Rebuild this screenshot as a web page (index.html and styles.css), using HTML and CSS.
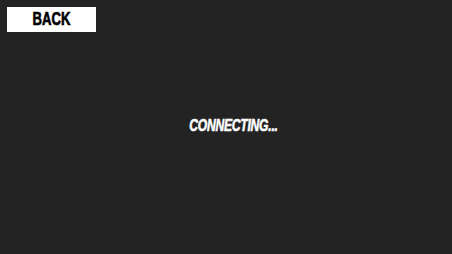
FILE: index.html
```html
<!DOCTYPE html>
<html>
<head>
<meta charset="utf-8">
<link rel="stylesheet" href="styles.css">
</head>
<body>
<div class="screen">
  <div class="top">
    <button class="back"><span class="back-label">BACK</span></button>
  </div>
  <div class="center">
    <span class="status">CONNECTING...</span>
  </div>
</div>
</body>
</html>
```
FILE: styles.css
```css
html, body {
  margin: 0;
  padding: 0;
  background: #232323;
}
.screen {
  width: 452px;
  height: 254px;
  display: flex;
  flex-direction: column;
  box-sizing: border-box;
  padding: 7px;
}
.top {
  display: flex;
}
.back {
  width: 89px;
  height: 25px;
  background: #ffffff;
  border: none;
  padding: 0 0 2px 0;
  margin: 0;
  display: flex;
  align-items: center;
  justify-content: center;
}
.back-label {
  display: inline-block;
  font-family: "Liberation Sans", Arial, sans-serif;
  font-weight: bold;
  font-size: 19px;
  line-height: 1;
  color: #000;
  -webkit-text-stroke: 0.7px #000;
  transform: scaleX(0.69);
}
.center {
  flex: 1;
  display: flex;
  align-items: center;
  justify-content: center;
  padding: 0 0 26px 15px;
}
.status {
  display: inline-block;
  font-family: "Liberation Sans", Arial, sans-serif;
  font-weight: bold;
  font-style: italic;
  font-size: 16.8px;
  line-height: 1;
  letter-spacing: -0.3px;
  color: #fff;
  -webkit-text-stroke: 0.6px #fff;
  transform: scaleX(0.72);
}
```
